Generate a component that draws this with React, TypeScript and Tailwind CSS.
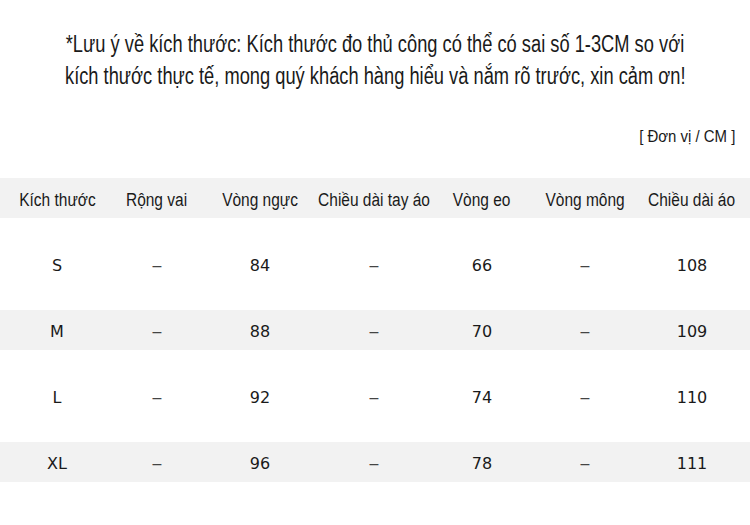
const sans = { fontFamily: '"Liberation Sans", Arial, sans-serif' };

const headers = [
  "Kích thước",
  "Rộng vai",
  "Vòng ngực",
  "Chiều dài tay áo",
  "Vòng eo",
  "Vòng mông",
  "Chiều dài áo",
];

const rows = [
  { size: "S", cells: ["–", "84", "–", "66", "–", "108"], tall: true },
  { size: "M", cells: ["–", "88", "–", "70", "–", "109"], tall: false },
  { size: "L", cells: ["–", "92", "–", "74", "–", "110"], tall: true },
  { size: "XL", cells: ["–", "96", "–", "78", "–", "111"], tall: false },
];

const cols = "grid grid-cols-[114px_86px_120px_108px_108px_98px_116px]";

export default function App() {
  return (
    <div className="w-[750px] h-[525px] bg-white text-[#1a1a1a] overflow-hidden">
      {/* Note, squeezed to look like a condensed face */}
      <div className="pt-[28px] flex flex-col items-center text-[23px] leading-[32px]" style={sans}>
        <p className="inline-block whitespace-nowrap scale-x-[0.795]">
          *Lưu ý về kích thước: Kích thước đo thủ công có thể có sai số 1-3CM so với
        </p>
        <p className="inline-block whitespace-nowrap scale-x-[0.795]">
          kích thước thực tế, mong quý khách hàng hiểu và nắm rõ trước, xin cảm ơn!
        </p>
      </div>

      <div className="mt-[34px] pr-[15px] flex justify-end text-[17px] leading-[22px]" style={sans}>
        <span className="inline-block whitespace-nowrap scale-x-[0.88] origin-right">[ Đơn vị / CM ]</span>
      </div>

      {/* Table */}
      <div className="mt-[30px]">
        <div className={`${cols} h-[40px] pt-[5px] items-center bg-[#f2f2f2] text-[18px]`} style={sans}>
          {headers.map((h) => (
            <div key={h} className="flex justify-center whitespace-nowrap">
              <span className="inline-block scale-x-[0.86]">{h}</span>
            </div>
          ))}
        </div>

        {rows.map((r) => (
          <div
            key={r.size}
            className={`${cols} pt-[4px] items-center text-[16px] ${r.tall ? "h-[92px] bg-white" : "h-[40px] bg-[#f2f2f2]"}`}
            style={{ fontFamily: '"DejaVu Sans", Verdana, sans-serif' }}
          >
            <div className="text-center">{r.size}</div>
            {r.cells.map((c, i) =>
              c === "–" ? (
                <div key={i} className="text-center text-[#444]" style={sans}>
                  {c}
                </div>
              ) : (
                <div key={i} className="text-center">
                  {c}
                </div>
              )
            )}
          </div>
        ))}
      </div>
    </div>
  );
}
